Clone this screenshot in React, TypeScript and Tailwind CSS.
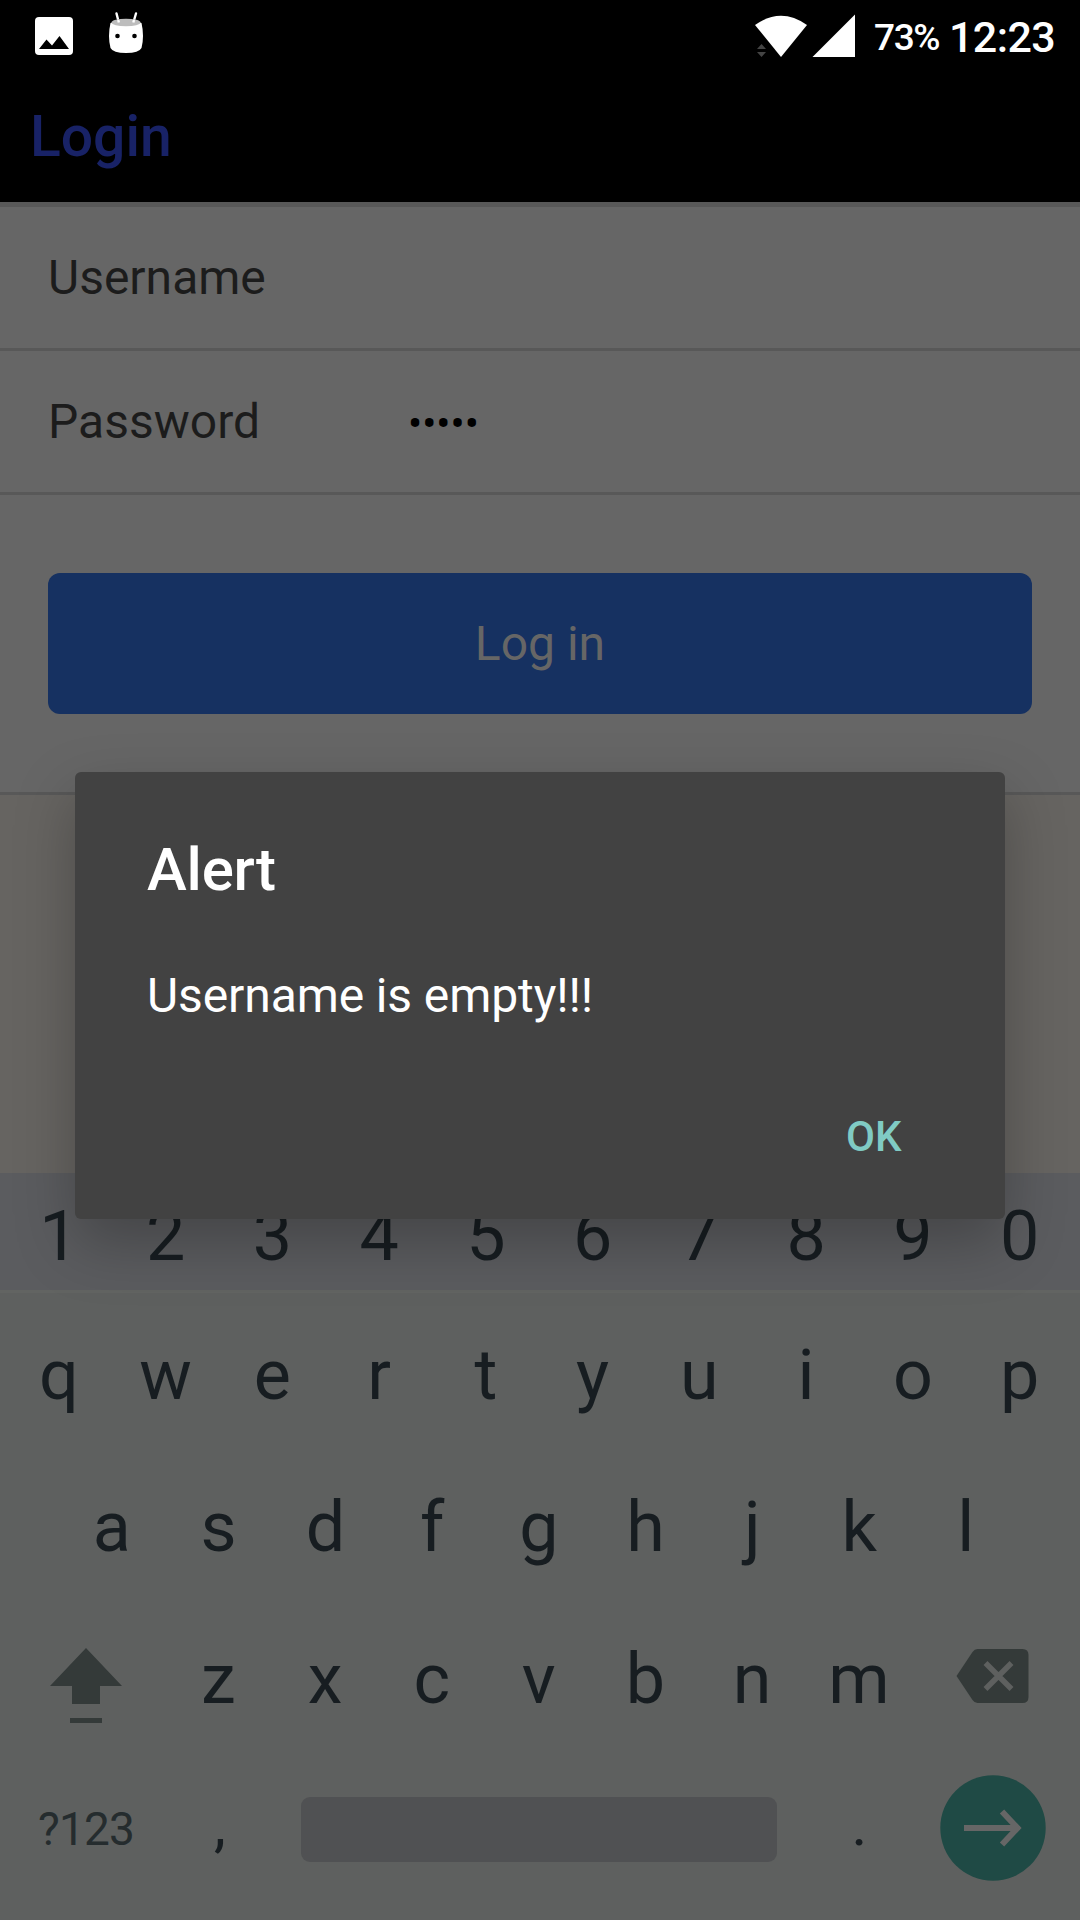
import React from "react";

const keyText = "text-[70px] leading-[82px] text-[#171d21]";

function Key({ children }: { children: React.ReactNode }) {
  return <span className="w-[106.75px] shrink-0 text-center">{children}</span>;
}

function StatusBar() {
  return (
    <div className="flex h-[72px] items-start justify-between text-white">
      <svg width="160" height="72" viewBox="0 0 160 72">
        <rect x="35" y="17" width="38" height="38" rx="4" fill="#fff" />
        <path d="M39 49L46.5 39.5L52 45.5L59.5 36L69 49Z" fill="#000" />
        <path d="M116.5 13.5L118.7 22M136 13.5L133.5 22" stroke="#fff" strokeWidth="2.4" strokeLinecap="round" />
        <path d="M110.5 23Q126 17 141.500 23Q144.500 36 141.500 48Q139 53 126 53Q113 53 110.500 48Q107.500 36 110.500 23Z" fill="#fff" />
        <ellipse cx="126" cy="22.500" rx="14.500" ry="3.800" fill="#bdbdbd" />
        <path d="M118.2 20L118.9 22.500M134 20L133.300 22.500" stroke="#fff" strokeWidth="2.4" />
        <circle cx="117.500" cy="36" r="2.300" fill="#000" />
        <circle cx="134.500" cy="36" r="2.300" fill="#000" />
      </svg>
      <div className="flex">
        <svg width="120" height="72" viewBox="750 0 120 72">
          <path d="M755 25Q781 6.500 807 25L781 57Z" fill="#fff" />
          <path d="M812.500 57L855 14.500V57Z" fill="#fff" />
          <path d="M757 49L761.500 44L766 49ZM757 52H766L761.500 57Z" fill="#444" />
        </svg>
        <span className="mt-[16px] w-[79px] pl-1 text-[37px] leading-[44px] font-medium tracking-[-1.4px]">73%</span>
        <span className="mt-[12px] w-[131px] text-[43px] leading-[50px] font-medium tracking-[-0.6px]">12:23</span>
      </div>
    </div>
  );
}

function Field({ label, value }: { label: string; value?: string }) {
  return (
    <div className="flex h-[144px] items-center border-b-3 border-[#585858] pl-[48px]">
      <span className="w-[360px] text-[48px] leading-[56px] text-[#1c1c1c]">{label}</span>
      <span className="pt-[4px] text-[42px] leading-[50px] text-black">{value}</span>
    </div>
  );
}

function Keyboard() {
  return (
    <div className="flex h-[747px] flex-col bg-[#5e605f]">
      <div className={"flex h-[120px] border-b-3 border-[#626462] bg-[#5b5c5f] pt-[22px] pl-[5.5px] " + keyText}>
        {"1234567890".split("").map((k) => <Key key={k}>{k}</Key>)}
      </div>
      <div className={"flex h-[152px] pt-[41px] pl-[5.5px] " + keyText}>
        {"qwertyuiop".split("").map((k) => <Key key={k}>{k}</Key>)}
      </div>
      <div className={"flex h-[152px] pt-[41px] pl-[58.5px] " + keyText}>
        {"asdfghjkl".split("").map((k) => <Key key={k}>{k}</Key>)}
      </div>
      <div className={"flex h-[152px] pt-[41px] " + keyText}>
        <svg className="shrink-0" width="165" height="100" viewBox="0 1638 165 100">
          <path d="M86 1648L122 1686H100V1704H72V1686H50Z" fill="#343a39" />
          <rect x="70" y="1718" width="32" height="5" fill="#343a39" />
        </svg>
        {"zxcvbnm".split("").map((k) => <Key key={k}>{k}</Key>)}
        <svg className="shrink-0" width="166" height="100" viewBox="912.5 1638 166 100">
          <path d="M978 1649H1023Q1029 1649 1029 1655V1697Q1029 1703 1023 1703H978Q975 1703 973 1700L957 1676L973 1652Q975 1649 978 1649Z" fill="#343a39" />
          <path d="M986 1663L1012 1689M1012 1663L986 1689" stroke="#5e605f" strokeWidth="5.500" />
        </svg>
      </div>
      <div className="flex h-[171px] text-[#171d21]">
        <span className="mt-[53px] ml-[38px] w-[168px] text-[46px] leading-[54px] tracking-[-0.8px] text-[#252c2e]">?123</span>
        <span className="mt-[41px] w-[95px] pl-[8px] text-[60px] leading-[70px]">,</span>
        <span className="mt-[48px] h-[65px] w-[476px] rounded-[9px] bg-[#505153]" />
        <span className="mt-[41px] w-[163px] pl-[74.5px] text-[60px] leading-[70px]">.</span>
        <svg className="mt-[26px]" width="106" height="107" viewBox="940 1775 106 107">
          <circle cx="993" cy="1828" r="52.700" fill="#1f4a45" />
          <path d="M964 1828H1017M1002 1811.500L1017.500 1828L1002 1844.500" fill="none" stroke="#666" strokeWidth="6" />
        </svg>
      </div>
    </div>
  );
}

export default function App() {
  return (
    <div className="relative h-[1920px] w-[1080px] overflow-hidden bg-[#666461] font-['Roboto',sans-serif]">
      <header className="h-[202px] bg-black">
        <StatusBar />
        <h1 className="mt-[32px] ml-[30px] text-[57px] leading-[66px] font-medium text-[#182266]">Login</h1>
      </header>
      <main className="h-[971px]">
        <div className="h-[593px] border-t-5 border-b-3 border-[#585858] bg-[#666]">
          <Field label="Username" />
          <Field label="Password" value="•••••" />
          <button className="mx-[48px] mt-[78px] flex h-[141px] w-[984px] items-center justify-center rounded-[12px] bg-[#163161] text-[48px] text-[#666]">
            Log in
          </button>
        </div>
      </main>
      <Keyboard />
      <div
        role="alertdialog"
        className="absolute top-[772px] left-[75px] h-[447px] w-[930px] rounded-[6px] bg-[#424242] pt-[63px] pl-[72px] shadow-[0_24px_60px_rgba(0,0,0,0.25)]"
      >
        <h2 className="text-[60px] leading-[70px] font-medium tracking-[-0.2px] text-white">Alert</h2>
        <p className="mt-[63px] text-[48px] leading-[56px] tracking-[-0.1px] text-white">Username is empty!!!</p>
        <button className="mt-[88px] ml-[699px] block text-[42px] leading-[50px] font-medium text-[#80cbc4]">OK</button>
      </div>
    </div>
  );
}
